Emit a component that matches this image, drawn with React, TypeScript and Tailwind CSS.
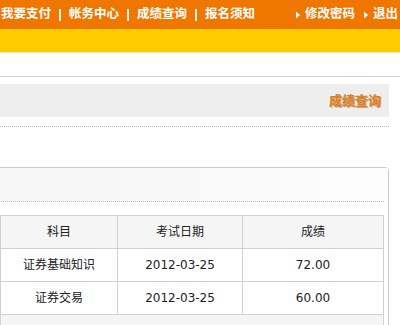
const font = "font-['Verdana','DejaVu_Sans','Noto_Sans_CJK_SC',sans-serif]";

function Sep() {
  return <span className="mx-[8px] h-[12px] w-[2px] shrink-0 bg-[#fff4e6]" />;
}

function Arrow() {
  return (
    <svg width="6" height="8" viewBox="0 0 6 8" className="mr-[4px]">
      <path d="M1 0.5 L5 4 L1 7.5 Z" fill="#ffffff" />
    </svg>
  );
}

const rows = [
  { subject: "证券基础知识", date: "2012-03-25", score: "72.00" },
  { subject: "证券交易", date: "2012-03-25", score: "60.00" },
];

export default function App() {
  return (
    <div className={`w-[400px] h-[325px] overflow-hidden bg-white ${font}`}>
      {/* top nav */}
      <div className="flex h-[29px] items-center bg-[#ef7700] text-[12.5px] font-bold text-white whitespace-nowrap">
        <span className="ml-[1px]">我要支付</span>
        <Sep />
        <span>帐务中心</span>
        <Sep />
        <span>成绩查询</span>
        <Sep />
        <span>报名须知</span>
        <span className="ml-[40px] flex items-center">
          <Arrow />
          修改密码
        </span>
        <span className="ml-[8px] flex items-center">
          <Arrow />
          退出
        </span>
      </div>
      <div className="h-[24px] bg-[#ffcc00] border-b border-[#e6e0cc]" />

      {/* title band */}
      <div className="mt-[23px] border-t border-[#d0d0d0]">
        <div className="mt-[7px] mr-[11px] flex h-[33px] items-center justify-end bg-[#eeeeee] pr-[8px]">
          <span className="text-[13px] font-bold text-[#dc7f1e] [text-shadow:1px_1px_0_#c9a47a]">成绩查询</span>
        </div>
        <div className="mt-[9px] mr-[11px] border-t border-dotted border-[#b8b8b8]" />
      </div>

      {/* panel */}
      <div className="mt-[40px] -ml-[6px] mr-[11px] rounded-tr-[4px] border border-[#cccccc]">
        <div className="h-[33px] bg-gradient-to-r from-[#f6f6f6] via-[#f8f8f8] to-[#fdfdfd]" />
        <div className="ml-[6px] mr-[4px] border-t border-dotted border-[#b8b8b8]" />
        <div className="mt-[13px] ml-[5px] mr-[4px]">
          <table className="w-full border-collapse text-[12px] text-[#222]">
            <colgroup>
              <col className="w-[117px]" />
              <col className="w-[125px]" />
              <col />
            </colgroup>
            <thead>
              <tr className="h-[33px] bg-[#f5f5f5]">
                <th className="border border-[#d0d0d0] font-normal">科目</th>
                <th className="border border-[#d0d0d0] font-normal">考试日期</th>
                <th className="border border-[#d0d0d0] font-normal">成绩</th>
              </tr>
            </thead>
            <tbody>
              {rows.map((r) => (
                <tr key={r.subject} className="h-[33px] bg-white text-center">
                  <td className="border border-[#d0d0d0]">{r.subject}</td>
                  <td className="border border-[#d0d0d0]">{r.date}</td>
                  <td className="border border-[#d0d0d0]">{r.score}</td>
                </tr>
              ))}
              <tr className="h-[33px] bg-[#f5f5f5]">
                <td colSpan={3} className="border border-[#d0d0d0]" />
              </tr>
            </tbody>
          </table>
        </div>
      </div>
    </div>
  );
}
